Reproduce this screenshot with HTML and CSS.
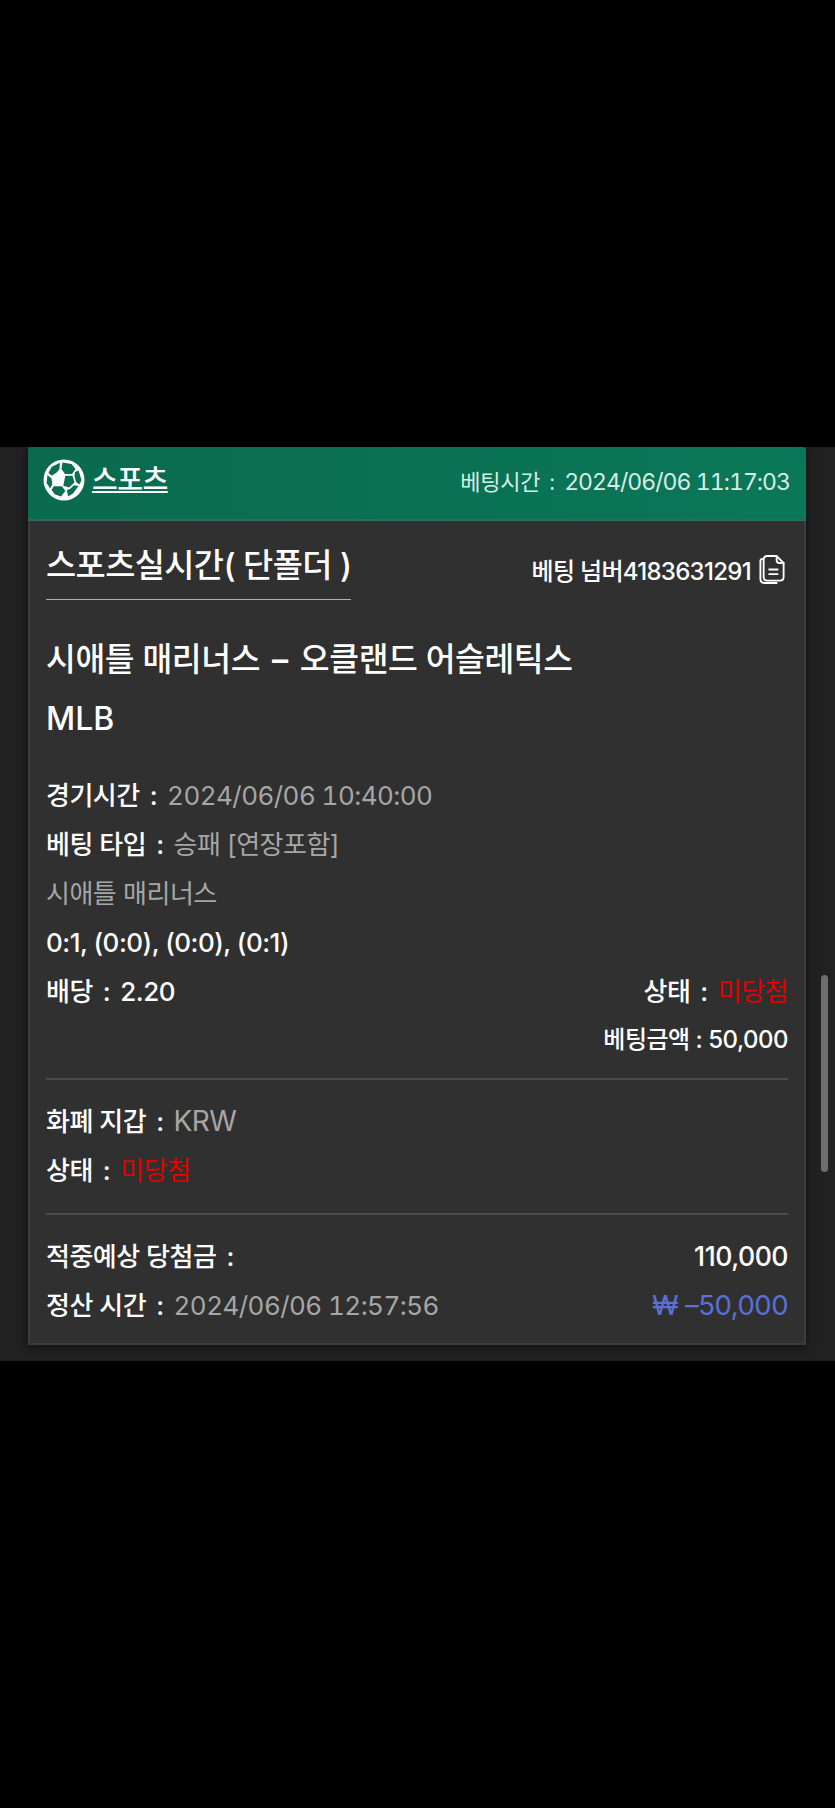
FILE: index.html
```html
<!DOCTYPE html>
<html lang="ko">
<head>
<meta charset="UTF-8" />
<meta name="viewport" content="width=device-width, initial-scale=1.0" />
<title>Bet detail</title>
<link rel="stylesheet" href="styles.css">
</head>
<body>
<div class="panel">
  <div class="scrollbar"></div>
  <div class="card">
    <div class="card-head">
      <div class="brand">
        <svg class="ball" viewBox="0 0 42 42">
          <circle cx="21" cy="21" r="20.500" fill="#fff"/>
          <g fill="#0a6f50">
            <path d="M8.500 8 L16.800 3.800 L16.500 10 L14 13.200 L8.800 16.800 L5.500 14 Z"/>
            <path d="M19.500 3.500 L28.500 5 L32.500 10 L29 15 L22 15 L18.500 10 Z"/>
            <path d="M22.300 16.800 L29.500 16.800 L31.500 23.500 L26 28.500 L20.300 26.800 Z"/>
            <path d="M32 13 L35.500 11.500 L38.500 21 L36.500 25.500 L33 23 L31.500 17 Z"/>
            <path d="M10.800 27.300 L19 27.300 L22.300 32 L18 37.500 L12 35.500 L8.500 31 Z"/>
            <path d="M31 26.300 L35.500 27 L30 34.500 L25 37.500 L24 31 L27 30 Z"/>
            <path d="M4.500 16 L8.500 19.500 L9.300 25 L7.300 29.500 L3.500 24 Z"/>
          </g>
        </svg>
        <span class="brand-name">스포츠</span>
      </div>
      <div class="bet-time">베팅시간<i class="colon">:</i><span class="num">2024/06/06 11:17:03</span></div>
    </div>
    <div class="card-body">
      <div class="title-row">
        <h2 class="title">스포츠실시간( 단폴더 )</h2>
        <div class="bet-no">
          <span>베팅 넘버4183631291</span>
          <svg class="copy" viewBox="0 0 28 32" fill="none" stroke="#fff" stroke-width="2" stroke-linejoin="round" stroke-linecap="round">
            <path d="M5 4.500 H4 Q1.500 4.500 1.500 7 V26 Q1.500 30.500 6 30.500 H19"/>
            <path d="M9 1.500 H19 L26.500 9 V24 Q26.500 28 22.500 28 H9 Q5 28 5 24 V5.500 Q5 1.500 9 1.500 Z"/>
            <path d="M19 1.500 V6 Q19 9 22 9 H26.500"/>
            <path d="M11 16 H20 M11 21 H20"/>
          </svg>
        </div>
      </div>

      <div class="match">시애틀 매리너스<span class="dash">–</span>오클랜드 어슬레틱스</div>
      <div class="league">MLB</div>

      <div class="rows first">
        <div class="row"><b>경기시간<i class="colon">:</i></b><span class="muted num">2024/06/06 10:40:00</span></div>
        <div class="row"><b>베팅 타입<i class="colon">:</i></b><span class="muted">승패 [연장포함]</span></div>
        <div class="row"><span class="muted">시애틀 매리너스</span></div>
        <div class="row"><b>0:1, (0:0), (0:0), (0:1)</b></div>
        <div class="row split">
          <b>배당<i class="colon">:</i>2.20</b>
          <span><b>상태<i class="colon">:</i></b><span class="red">미당첨</span></span>
        </div>
        <div class="row stake"><b>베팅금액 : 50,000</b></div>
      </div>

      <hr class="rule">

      <div class="rows">
        <div class="row"><b>화폐 지갑<i class="colon">:</i></b><span class="muted code">KRW</span></div>
        <div class="row"><b>상태<i class="colon">:</i></b><span class="red">미당첨</span></div>
      </div>

      <hr class="rule">

      <div class="rows">
        <div class="row split">
          <b>적중예상 당첨금<i class="colon">:</i></b>
          <b class="big">110,000</b>
        </div>
        <div class="row split">
          <span><b>정산 시간<i class="colon">:</i></b><span class="muted num">2024/06/06 12:57:56</span></span>
          <span class="blue">₩ –50,000</span>
        </div>
      </div>
    </div>
  </div>
</div>
</body>
</html>
```

FILE: styles.css
```css
body {
  margin: 0;
  height: 1808px;
  background: #000;
  font-family: Inter, "Noto Sans CJK KR", sans-serif;
  color: #fff;
  padding-top: 447px;
  box-sizing: border-box;
}
b {
  font-weight: 500;
}
.colon {
  font-style: normal;
  margin: 0 10px;
}
.num {
  font-variant-numeric: tabular-nums;
  font-size: 26px;
  letter-spacing: -0.55px;
}
.code {
  font-size: 28px;
}
.panel {
  position: relative;
  height: 914px;
  padding: 0 29px 0 28px;
  background: #212121;
  box-sizing: border-box;
}
.scrollbar {
  position: absolute;
  right: 7px;
  top: 528px;
  width: 7px;
  height: 197px;
  border-radius: 4px;
  background: #6e6e6e;
}
.card {
  height: 898px;
  background: #303030;
  box-shadow: 0 2px 8px rgba(0, 0, 0, 0.5);
}
.card-head {
  height: 74px;
  display: flex;
  align-items: center;
  justify-content: space-between;
  padding: 0 16px 6px 15px;
  box-sizing: border-box;
  background: linear-gradient(90deg, #0a6a4e, #0a7858);
  border-bottom: 2px solid #2e6a62;
  border-radius: 4px 4px 0 0;
}
.brand {
  display: flex;
  align-items: center;
  gap: 7px;
}
.ball {
  width: 42px;
  height: 42px;
}
.brand-name {
  font-size: 28px;
  font-weight: 500;
  line-height: 36px;
  letter-spacing: -0.5px;
  text-decoration: underline;
  text-underline-offset: 1px;
  text-decoration-thickness: 2px;
}
.bet-time {
  font-size: 22px;
  color: #d8ece5;
  letter-spacing: -0.3px;
}
.bet-time .colon {
  margin: 0 9px;
}
.bet-time .num {
  font-size: 23px;
  letter-spacing: -0.95px;
}
.card-body {
  height: 824px;
  padding: 0 16px;
  box-sizing: border-box;
  border: 2px solid #3c3c3c;
  border-top: 0;
}
.title-row {
  display: flex;
  justify-content: space-between;
  align-items: flex-start;
  height: 79px;
}
.title {
  margin: 16px 0 0;
  height: 63px;
  font-size: 32.8px;
  line-height: 56px;
  font-weight: 500;
  letter-spacing: -0.6px;
  border-bottom: 1px solid #b0b0b0;
  box-sizing: border-box;
}
.bet-no {
  display: flex;
  align-items: center;
  gap: 8px;
  margin: 31px 3px 0 0;
  font-size: 24px;
  font-weight: 500;
  letter-spacing: -0.7px;
}
.copy {
  width: 26px;
  height: 31px;
}
.match {
  margin-top: 35px;
  font-size: 32.4px;
  line-height: 50px;
  font-weight: 500;
  letter-spacing: -0.4px;
}
.dash {
  margin: 0 12px;
  font-weight: 600;
}
.league {
  margin-top: 9px;
  font-size: 32px;
  line-height: 50px;
  font-weight: 500;
}
.rows {
  display: flex;
  flex-direction: column;
  padding: 17px 0 18px;
}
.rows.first {
  padding: 27px 0 17px;
}
.row {
  height: 49px;
  line-height: 49px;
  font-size: 26px;
  letter-spacing: -0.5px;
}
.split {
  display: flex;
  justify-content: space-between;
}
.stake {
  height: 45px;
  line-height: 47px;
  text-align: right;
  font-size: 24px;
}
.big {
  font-size: 26.6px;
}
.muted {
  color: #a6a6a6;
}
.red {
  color: #e00000;
}
.blue {
  color: #5a70d8;
  font-size: 27.5px;
}
.rule {
  margin: 0;
  border: 0;
  height: 2px;
  background: #4c4c4c;
}
```
